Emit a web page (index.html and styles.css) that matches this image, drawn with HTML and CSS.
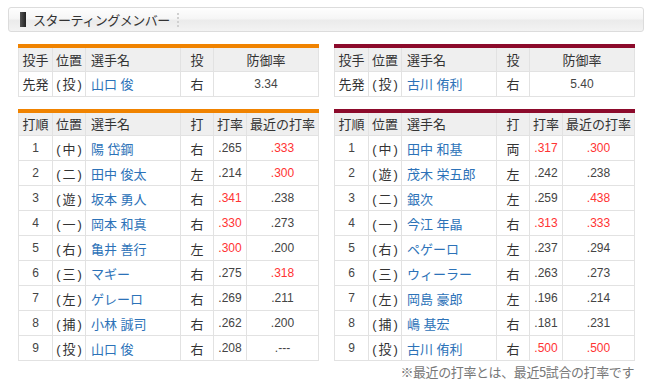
FILE: index.html
```html
<!DOCTYPE html>
<html lang="ja">
<head>
<meta charset="utf-8">
<link rel="stylesheet" href="styles.css">
</head>
<body>
<div class="page">
  <div class="title"><span class="bar"></span><span class="title-text">スターティングメンバー</span><span class="sep"></span></div>
  <div class="tables">
    <table class="tbl home">
      <colgroup><col class="c1"><col class="c2"><col class="c3"><col class="c4"><col class="c56"></colgroup>
      <tr class="head"><th>投手</th><th>位置</th><th class="l">選手名</th><th>投</th><th>防御率</th></tr>
      <tr><td>先発</td><td class="pos">(投)</td><td class="name">山口 俊</td><td>右</td><td class="num">3.34</td></tr>
    </table>
    <table class="tbl away">
      <colgroup><col class="c1"><col class="c2"><col class="c3"><col class="c4"><col class="c56"></colgroup>
      <tr class="head"><th>投手</th><th>位置</th><th class="l">選手名</th><th>投</th><th>防御率</th></tr>
      <tr><td>先発</td><td class="pos">(投)</td><td class="name">古川 侑利</td><td>右</td><td class="num">5.40</td></tr>
    </table>
    <table class="tbl home">
      <colgroup><col class="c1"><col class="c2"><col class="c3"><col class="c4"><col class="c5"><col class="c6"></colgroup>
      <tr class="head"><th>打順</th><th>位置</th><th class="l">選手名</th><th>打</th><th>打率</th><th>最近の打率</th></tr>
      <tr><td class="num">1</td><td class="pos">(中)</td><td class="name">陽 岱鋼</td><td>右</td><td class="num">.265</td><td class="num red">.333</td></tr>
      <tr><td class="num">2</td><td class="pos">(二)</td><td class="name">田中 俊太</td><td>左</td><td class="num">.214</td><td class="num red">.300</td></tr>
      <tr><td class="num">3</td><td class="pos">(遊)</td><td class="name">坂本 勇人</td><td>右</td><td class="num red">.341</td><td class="num">.238</td></tr>
      <tr><td class="num">4</td><td class="pos">(一)</td><td class="name">岡本 和真</td><td>右</td><td class="num red">.330</td><td class="num">.273</td></tr>
      <tr><td class="num">5</td><td class="pos">(右)</td><td class="name">亀井 善行</td><td>左</td><td class="num red">.300</td><td class="num">.200</td></tr>
      <tr><td class="num">6</td><td class="pos">(三)</td><td class="name">マギー</td><td>右</td><td class="num">.275</td><td class="num red">.318</td></tr>
      <tr><td class="num">7</td><td class="pos">(左)</td><td class="name">ゲレーロ</td><td>右</td><td class="num">.269</td><td class="num">.211</td></tr>
      <tr><td class="num">8</td><td class="pos">(捕)</td><td class="name">小林 誠司</td><td>右</td><td class="num">.262</td><td class="num">.200</td></tr>
      <tr><td class="num">9</td><td class="pos">(投)</td><td class="name">山口 俊</td><td>右</td><td class="num">.208</td><td class="num">.---</td></tr>
    </table>
    <table class="tbl away">
      <colgroup><col class="c1"><col class="c2"><col class="c3"><col class="c4"><col class="c5"><col class="c6"></colgroup>
      <tr class="head"><th>打順</th><th>位置</th><th class="l">選手名</th><th>打</th><th>打率</th><th>最近の打率</th></tr>
      <tr><td class="num">1</td><td class="pos">(中)</td><td class="name">田中 和基</td><td>両</td><td class="num red">.317</td><td class="num red">.300</td></tr>
      <tr><td class="num">2</td><td class="pos">(遊)</td><td class="name">茂木 栄五郎</td><td>左</td><td class="num">.242</td><td class="num">.238</td></tr>
      <tr><td class="num">3</td><td class="pos">(二)</td><td class="name">銀次</td><td>左</td><td class="num">.259</td><td class="num red">.438</td></tr>
      <tr><td class="num">4</td><td class="pos">(一)</td><td class="name">今江 年晶</td><td>右</td><td class="num red">.313</td><td class="num red">.333</td></tr>
      <tr><td class="num">5</td><td class="pos">(右)</td><td class="name">ペゲーロ</td><td>左</td><td class="num">.237</td><td class="num">.294</td></tr>
      <tr><td class="num">6</td><td class="pos">(三)</td><td class="name">ウィーラー</td><td>右</td><td class="num">.263</td><td class="num">.273</td></tr>
      <tr><td class="num">7</td><td class="pos">(左)</td><td class="name">岡島 豪郎</td><td>左</td><td class="num">.196</td><td class="num">.214</td></tr>
      <tr><td class="num">8</td><td class="pos">(捕)</td><td class="name">嶋 基宏</td><td>右</td><td class="num">.181</td><td class="num">.231</td></tr>
      <tr><td class="num">9</td><td class="pos">(投)</td><td class="name">古川 侑利</td><td>右</td><td class="num red">.500</td><td class="num red">.500</td></tr>
    </table>
  </div>
  <p class="note">※最近の打率とは、最近5試合の打率です</p>
</div>
</body>
</html>
```

FILE: styles.css
```css
* { box-sizing: border-box; }
body {
  margin: 0;
  background: #fff;
  color: #333;
  font-family: "Liberation Sans", "Noto Sans CJK JP", sans-serif;
}
.page {
  width: 636px;
  margin: 7px 0 0 8px;
}
.title {
  height: 25px;
  border: 1px solid #dcdcdc;
  border-radius: 3px;
  background: linear-gradient(#fefefe 0%, #f6f6f6 45%, #ebebeb 55%, #f3f3f3 100%);
  display: flex;
  align-items: center;
  padding-left: 11px;
}
.bar {
  width: 6px;
  height: 15px;
  background: linear-gradient(90deg, #555, #222);
  margin-right: 7px;
}
.title-text {
  font-size: 13px;
  color: #333;
  font-family: "Noto Sans CJK JP", sans-serif;
  letter-spacing: -0.5px;
}
.sep {
  width: 0;
  height: 14px;
  margin-left: 7px;
  border-left: 2px dotted #d0d0d0;
}
.tables {
  display: grid;
  grid-template-columns: 300px 300px;
  column-gap: 16px;
  row-gap: 12px;
  padding: 12px 10px 0;
}
.tbl {
  width: 300px;
  border-collapse: collapse;
  table-layout: fixed;
  font-size: 13px;
}
.tbl.home { border-top: 4px solid #f08300; }
.tbl.away { border-top: 4px solid #8c0a2b; }
.c1 { width: 34px; }
.c2 { width: 33px; }
.c3 { width: 95px; }
.c4 { width: 33px; }
.c5 { width: 33px; }
.c6 { width: 72px; }
.c56 { width: 105px; }
.tbl th, .tbl td {
  border: 1px solid #e2e2e2;
  height: 25px;
  padding: 0;
  text-align: center;
  font-weight: normal;
  white-space: nowrap;
  overflow: hidden;
}
.tbl th {
  background: #efefef;
  color: #333;
}
.tbl .l { text-align: left; padding-left: 5px; }
.tbl td.name {
  text-align: left;
  padding-left: 5px;
  color: #2c72b8;
}
.tbl td.pos { letter-spacing: 2px; padding-left: 2px; }
.tbl td.num { font-size: 12px; color: #444; }
.tbl td.red { color: #ff3333; }
.note {
  margin: 3px 10px 0 0;
  text-align: right;
  font-size: 13px;
  line-height: 16px;
  color: #777;
  font-family: "Noto Sans CJK JP", sans-serif;
  letter-spacing: -0.4px;
}
```
